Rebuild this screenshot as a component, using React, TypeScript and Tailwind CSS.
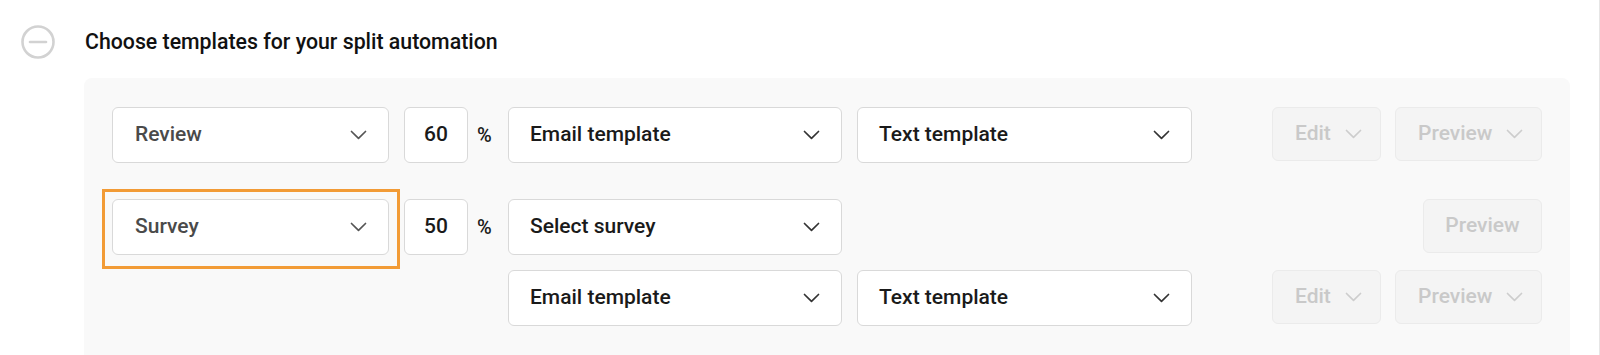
import React from 'react'

function Chevron({ className = '' }: { className?: string }) {
  return (
    <svg className={className} width="17" height="10" viewBox="0 0 17 10" fill="none" stroke="currentColor" strokeWidth="1.7" strokeLinecap="round" strokeLinejoin="round">
      <polyline points="1.5,1.5 8.5,8.3 15.5,1.5" />
    </svg>
  )
}

function Select({ label, width, muted = false }: { label: string; width: string; muted?: boolean }) {
  return (
    <div className={`${width} h-[56px] shrink-0 flex items-center justify-between ${muted ? 'pl-[22px]' : 'pl-[21px]'} pr-[21px] bg-white border border-[#d9d9d9] rounded-[6px]`}>
      <span className={`text-[21px] font-medium ${muted ? 'text-[#4a4a4a]' : 'text-[#1a1a1a]'}`}>{label}</span>
      <Chevron className={muted ? 'text-[#555]' : 'text-[#333]'} />
    </div>
  )
}

function Percent({ value }: { value: string }) {
  return (
    <div className="flex items-center h-[56px] shrink-0">
      <div className="w-[64px] h-[56px] ml-[15px] flex items-center justify-center bg-white border border-[#d9d9d9] rounded-[6px] text-[21px] font-medium text-[#1a1a1a]">
        {value}
      </div>
      <span className="ml-[9px] w-[15px] text-[20px] font-medium text-[#1a1a1a]">%</span>
    </div>
  )
}

function GhostButton({ label, width, chevron = true }: { label: string; width: string; chevron?: boolean }) {
  return (
    <div className={`${width} h-[54px] shrink-0 flex items-center ${chevron ? 'justify-between pl-[22px] pr-[18px]' : 'justify-center'} bg-[#f4f4f4] border border-[#ebebeb] rounded-[6px] text-[21px] font-medium text-[#c9c9c9]`}>
      <span>{label}</span>
      {chevron && <Chevron className="text-[#cdcdcd]" />}
    </div>
  )
}

export default function App() {
  return (
    <div className="w-[1600px] h-[355px] overflow-hidden bg-white border-r border-[#e6e6e6] font-['Roboto','Liberation_Sans',sans-serif]">
      <div className="flex items-center pl-[21px] pt-[25px]">
        <svg width="34" height="34" viewBox="0 0 34 34" fill="none" stroke="#d2d2d2" strokeWidth="2.6" strokeLinecap="round">
          <circle cx="17" cy="17" r="15.5" />
          <line x1="9" y1="17" x2="25" y2="17" />
        </svg>
        <h2 className="ml-[30px] text-[21.3px] leading-[28px] font-medium text-[#111]">Choose templates for your split automation</h2>
      </div>

      <div className="ml-[84px] mr-[29px] mt-[19px] rounded-t-[8px] bg-[#f9f9f9] px-[28px] pt-[29px] pb-[40px]">
        <div className="flex items-start">
          <Select label="Review" width="w-[277px]" muted />
          <Percent value="60" />
          <div className="ml-[16px]">
            <Select label="Email template" width="w-[334px]" />
          </div>
          <div className="ml-[15px]">
            <Select label="Text template" width="w-[335px]" />
          </div>
          <div className="ml-auto flex gap-[14px]">
            <GhostButton label="Edit" width="w-[109px]" />
            <GhostButton label="Preview" width="w-[147px]" />
          </div>
        </div>

        <div className="flex items-start mt-[36px]">
          <div className="relative">
            <Select label="Survey" width="w-[277px]" muted />
            <div className="absolute -left-[10px] -top-[10px] w-[298px] h-[80px] border-[3px] border-[#f29b36] pointer-events-none" />
          </div>
          <Percent value="50" />
          <div className="ml-[16px] flex-1 flex flex-col gap-[15px]">
            <div className="flex items-start">
              <Select label="Select survey" width="w-[334px]" />
              <div className="ml-auto">
                <GhostButton label="Preview" width="w-[119px]" chevron={false} />
              </div>
            </div>
            <div className="flex items-start">
              <Select label="Email template" width="w-[334px]" />
              <div className="ml-[15px]">
                <Select label="Text template" width="w-[335px]" />
              </div>
              <div className="ml-auto flex gap-[14px]">
                <GhostButton label="Edit" width="w-[109px]" />
                <GhostButton label="Preview" width="w-[147px]" />
              </div>
            </div>
          </div>
        </div>
      </div>
    </div>
  )
}
